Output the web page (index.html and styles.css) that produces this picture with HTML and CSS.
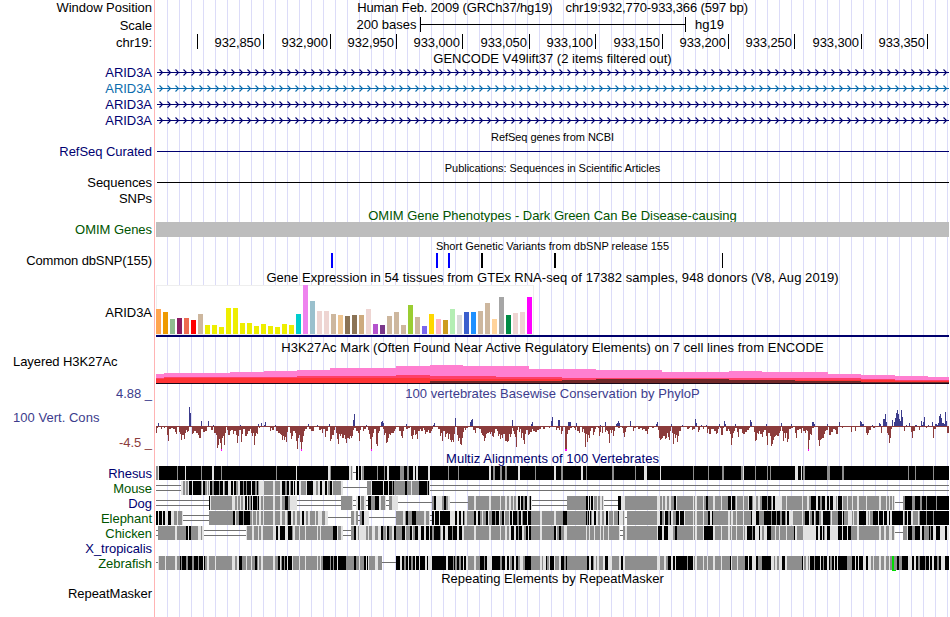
FILE: index.html
```html
<!DOCTYPE html>
<html lang="en">
<head>
<meta charset="utf-8">
<title>Human chr19:932,770-933,366</title>
<link rel="stylesheet" href="styles.css">
</head>
<body>
<main class="browser">
  <div class="row h16 top"><span class="label">Window Position</span><div class="track position"><span>Human Feb. 2009 (GRCh37/hg19)</span><span>chr19:932,770-933,366 (597 bp)</span></div></div>
  <div class="row h18"><span class="label">Scale</span><svg class="track" data-kind="scale" data-h="18"></svg></div>
  <div class="row h16"><span class="label">chr19:</span><svg class="track" data-kind="ruler" data-h="16"></svg></div>
  <div class="title h14 drop"><span>GENCODE V49lift37 (2 items filtered out)</span></div>
  <div class="row h16 navy"><span class="label">ARID3A</span><svg class="track" data-kind="gene" data-h="16"></svg></div>
  <div class="row h16 azure"><span class="label">ARID3A</span><svg class="track" data-kind="gene" data-h="16"></svg></div>
  <div class="row h16 navy"><span class="label">ARID3A</span><svg class="track" data-kind="gene" data-h="16"></svg></div>
  <div class="row h16 navy"><span class="label">ARID3A</span><svg class="track" data-kind="gene" data-h="16"></svg></div>
  <div class="title small h15 drop"><span>RefSeq genes from NCBI</span></div>
  <div class="row h16 navy"><span class="label">RefSeq Curated</span><svg class="track" data-kind="line" data-h="16"></svg></div>
  <div class="title small h15 drop"><span>Publications: Sequences in Scientific Articles</span></div>
  <div class="row h16"><span class="label">Sequences</span><svg class="track" data-kind="line" data-h="16"></svg></div>
  <div class="row h16"><span class="label">SNPs</span></div>
  <div class="title h16 green drop"><span>OMIM Gene Phenotypes - Dark Green Can Be Disease-causing</span></div>
  <div class="row h15"><span class="label green">OMIM Genes</span><div class="track omim"></div></div>
  <div class="title small h16 drop even"><span>Short Genetic Variants from dbSNP release 155</span></div>
  <div class="row h15"><span class="label tight">Common dbSNP(155)</span><svg class="track" data-kind="snps" data-h="15"></svg></div>
  <div class="title h17 drop wide"><span>Gene Expression in 54 tissues from GTEx RNA-seq of 17382 samples, 948 donors (V8, Aug 2019)</span></div>
  <div class="row h53"><span class="label low">ARID3A</span><svg class="track" data-kind="gtex" data-h="53"></svg></div>
  <div class="title h17 drop wide"><span>H3K27Ac Mark (Often Found Near Active Regulatory Elements) on 7 cell lines from ENCODE</span></div>
  <div class="row h29"><span class="label left">Layered H3K27Ac</span><svg class="track" data-kind="h3k" data-h="29"></svg></div>
  <div class="row h67">
    <div class="label limits"><span class="slate">4.88 _</span><span class="slate name">100 Vert. Cons</span><span class="maroon">-4.5 _</span></div>
    <div class="stack"><div class="title h16 slate drop wide"><span>100 vertebrates Basewise Conservation by PhyloP</span></div><svg class="track" data-kind="phylop" data-h="51"></svg></div>
  </div>
  <div class="title h15 navy wide"><span>Multiz Alignments of 100 Vertebrates</span></div>
  <div class="row h15"><span class="label navy">Rhesus</span><svg class="track" data-kind="align" data-name="rhesus" data-h="15"></svg></div>
  <div class="row h15"><span class="label green">Mouse</span><svg class="track" data-kind="align" data-name="mouse" data-h="15"></svg></div>
  <div class="row h15"><span class="label navy">Dog</span><svg class="track" data-kind="align" data-name="dog" data-h="15"></svg></div>
  <div class="row h15"><span class="label green">Elephant</span><svg class="track" data-kind="align" data-name="elephant" data-h="15"></svg></div>
  <div class="row h15"><span class="label green">Chicken</span><svg class="track" data-kind="align" data-name="chicken" data-h="15"></svg></div>
  <div class="row h15"><span class="label navy">X_tropicalis</span></div>
  <div class="row h15"><span class="label green">Zebrafish</span><svg class="track" data-kind="align" data-name="zebrafish" data-h="15"></svg></div>
  <div class="title h15"><span>Repeating Elements by RepeatMasker</span></div>
  <div class="row h15"><span class="label">RepeatMasker</span></div>
</main>
<script src="tracks.js"></script>
</body>
</html>
```
FILE: styles.css
```css
* { box-sizing: border-box; }
body { margin: 0; background: #fff; }
.browser {
  width: 949px;
  height: 617px;
  overflow: hidden;
  color: #000;
  font-family: "Liberation Sans", Arial, sans-serif;
  font-size: 13px;
  background:
    linear-gradient(#ffb4b4, #ffb4b4) 154px 0 / 1px 100% no-repeat,
    repeating-linear-gradient(to right, #dcdcf8 0 1px, transparent 1px 12px) 167px 0 / 782px 100% no-repeat;
}
.row { display: flex; align-items: center; white-space: nowrap; }
.row.top { align-items: flex-start; }
.label { width: 152px; margin-right: 4px; flex: none; text-align: right; line-height: 15px; letter-spacing: -0.04px; }
.label.tight { letter-spacing: -0.12px; }
.label.low { padding-top: 2px; }
.label.left { text-align: left; padding-left: 13px; align-self: flex-start; margin-top: -1px; letter-spacing: -0.07px; }
.track { display: block; width: 793px; flex: none; overflow: hidden; }
.title { margin-left: 156px; width: 793px; text-align: center; line-height: 15px; white-space: nowrap; }
.title.small { font-size: 11px; line-height: 17px; letter-spacing: -0.05px; }
.title.small.even { letter-spacing: 0; }
.title.drop { padding-top: 1px; }
.title.wide { letter-spacing: 0.055px; }
.title.h17, .stack .title.h16, .title.green { padding-top: 2px; }
.position { display: flex; justify-content: center; gap: 13px; line-height: 15px; letter-spacing: -0.14px; }
.omim { height: 15px; background: #bdbdbd; }
.stack { width: 793px; height: 67px; }
.stack .title { margin-left: 0; }
.limits { height: 67px; display: flex; flex-direction: column; justify-content: space-between; padding: 2px 0 1px; }
.limits .name { text-align: left; padding-left: 13px; margin-top: -2px; letter-spacing: 0.03px; }
.h14 { height: 14px; } .h15 { height: 15px; } .h16 { height: 16px; }
.h17 { height: 17px; } .h18 { height: 18px; } .h29 { height: 29px; }
.h53 { height: 53px; } .h67 { height: 67px; }
.navy { color: #000070; }
.azure { color: #0b6cad; }
.green { color: #005400; }
.slate { color: #3c3c8c; }
.maroon { color: #8c3c3c; }
svg text { font-size: 13px; fill: #000; }
```
FILE: tracks.js
```js
const X0 = 156, X1 = 949;
const NS = "http://www.w3.org/2000/svg";

function add(svg, tag, attrs, text) {
  const el = document.createElementNS(NS, tag);
  for (const k in attrs) el.setAttribute(k, attrs[k]);
  if (text) el.textContent = text;
  svg.appendChild(el);
}
function rect(svg, x, y, w, h, fill) {
  add(svg, "rect", { x, y, width: w, height: h, fill });
}
// "158w 159k" -> [[158, "w", 159], [159, "k", end]]
function runs(s) {
  const t = s.trim().split(/\s+/).map(p => p.match(/^(\d+)(.+)$/));
  return t.map((m, i) => [+m[1], m[2], i + 1 < t.length ? +t[i + 1][1] : X1]);
}

const alignments = {
  rhesus: "156g 158w 159k 177g 178k 185w 186k 201g 202k 212w 214k 221g 222k 276g 277k 296w 297k 328w 330g 331k 349w 351g 352w 353- 356k 358w 359k 361w 362g 364k 377g 378k 384g 385k 387w 389k 400g 404k 407g 409k 413w 415k 416w 418k 428w 430k 448g 449k 458g 459k 489w 491k 493g 495k 500g 502k 505g 507k 518w 520k 535g 536k 554w 556k 561g 563k 581w 583k 586g 587k 612g 614k 635g 636k 644w 647k 660w 661k 693g 694k 708g 709k 722g 724k 741g 743w 744k 755g 756k 767g 768k 770g 771k 795w 798k 801w 802k 803g 805k 827g 830k 842g 844k 908g 909k 915g 916k 933g 934k",
  mouse: "156= 181w 183g 185w 186g 188w 189k 192w 193k 201g 202w 203k 205g 207w 208g 209w 210k 212g 214k 219g 220k 223w 224g 225k 228w 231k 233w 234k 236g 238w 240k 243g 244k 246g 247k 251w 252k 255g 257k 258g 259w 264g 273w 275g 280w 282k 285g 287k 289w 290g 291k 293w 294k 295w 297k 299w 301g 306w 307k 313w 316g 318w 320k 322w 325k 327w 328g 330k 332w 333g 341w 343- 367g 371w 372k 383w 384k 388w 389k 392g 393k 394g 405k 407g 411w 412g 419k 427g 428k 429w 430=",
  dog: "156= 209k 210w 211g 232w 235g 237w 238g 240w 241g 243w 245k 247w 248k 249g 251k 252w 253k 257g 258k 259w 261g 263w 264g 273w 275g 280w 282g 285k 288g 290w 297= 341g 352w 353= 356w 358k 360w 361g 364w 366= 368k 371g 375k 379w 381g 385w 386= 389g 392w 398- 432g 434k 436w 442g 444k 446g 448w 450- 468g 474w 476g 489w 491g 500w 501g 505w 507g 509w 511g 513w 514g 516w 518k 520w 521k 523g 525k 527w 529g 530k 531w 532= 567g 586k 588w 589k 590w 591k 593w 594g 597w 598g 600w 602g 603w 604= 618k 621w 625g 657w 660g 662w 663g 665w 667g 669w 671g 674k 676w 677g 693w 694g 695w 697g 703w 704g 706k 708g 713w 715g 721w 722g 728k 731w 732k 735g 736w 737g 743w 744g 748w 749k 752g 753w 756g 758w 760g 762k 767g 768k 771g 772w 773k 775w 782g 786w 787g 802w 803g 807w 809g 811k 816w 818k 820g 822k 825w 827k 829w 830k 833w 836g 837w 838k 842w 843g 847w 848g 852w 853g 857w 859g 866w 867g 879w 881g 886w 887g 889w 890g 892w 893g 894w 895- 903g 905k 912g 915k 920g 922k 926g 927k 936g 937k",
  elephant: "156k 158w 159k 162w 163k 165w 168k 171w 174g 177w 178g 182w 183= 209g 233k 235w 236g 239k 243g 244k 250g 252w 253g 256w 257g 259w 261g 263w 264g 273w 275g 280w 282g 285w 287g 288k 291w 293g 295w 297g 300w 302k 304w 306g 308w 310g 315w 316g 318w 322g 325w 328- 351g 354w 356g 358= 360g 362k 364w 369- 396g 403w 405g 406k 408g 412k 416g 424w 426g 429w 430= 432k 434w 435k 439w 440k 450w 455k 457w 459k 461w 463k 464g 465w 467g 474k 476w 478k 480g 482w 483g 486k 488w 489g 492k 495g 496k 499w 500g 502k 504w 505g 509w 510k 512w 513k 517g 519k 521w 522g 523k 527w 528k 531g 540w 542g 554w 556g 563k 567g 586k 587g 588k 589w 590k 591g 592w 594k 596w 598g 600w 602g 604w 606k 608w 609g 613w 614g 618k 619w 623g 624w 625- 627g 657w 660k 662g 664w 665k 668g 670k 671w 673g 676k 679w 680k 684w 685g 693w 694g 695w 697g 703w 704g 708k 710w 712k 713g 728w 730g 731w 733g 736w 737g 743w 744g 751k 752w 756k 759g 764k 771g 772k 776g 777k 780g 782k 785g 786w 787k 789w 793g 802w 803g 805k 809w 810g 812k 814w 815g 816k 819g 821w 823k 830g 831w 832g 838k 842w 843k 844g 848w 852g 853w 854g 857w 859k 866w 868g 869w 870g 873k 878w 879k 883w 884k 887w 889k 890w 892k 903w 904g 905k 907w 908k 911w 913g 918w 919g 920k 926g 927k 933g 934k",
  chicken: "156= 158g 175w 177g 186k 188w 189k 191g 198w 201g 202w 204= 246w 247g 252w 254g 258w 259g 261w 263g 273w 276k 278w 280k 285w 288k 292g 293w 295g 299w 300g 305w 306g 317w 318g 320w 321g 333k 337w 338g 341w 343= 351g 354k 356w 358g 359w 366g 368w 369g 372w 375g 378w 381k 383g 386w 387k 389g 392w 394k 396g 402k 405w 406g 410k 412w 413g 415k 418w 421k 424w 426k 429w 430k 432g 434k 440g 441w 443k 445w 448k 452g 453k 457w 459k 462w 464g 474w 476g 489w 491g 500w 501g 505w 507g 509w 511k 514w 516k 518g 519k 522w 524g 526k 528w 529k 531g 540w 542g 554k 556w 557g 559k 561g 564w 567g 586w 587g 589w 590g 594w 595g 600w 601g 603w 604g 608w 609g 619w 620= 623g 625w 627g 657w 658k 662w 664k 668w 673g 675k 677g 693w 694g 695w 697g 703w 704k 713w 715g 721w 722g 728w 730g 731w 732g 736w 737g 743w 744g 745w 747k 752g 753k 755w 759k 760w 762g 764w 767k 771g 775w 776g 779w 780g 786w 787g 794k 795w 797g 803w 816k 818w 820k 822w 823k 824g 825w 827k 830w 838k 842w 843k 847w 848k 851g 857w 859g 879w 881g 884w 886g 889w 892g 894w 895- 903g 907w 908k 912g 915k 920w 922k 924g 929k 930g 931k 933w 936k 940w 945k 947w",
  zebrafish: "156- 158w 159g 165w 166g 175w 177g 180k 181g 182k 186g 188k 192g 194k 198g 199k 203w 204k 205g 207w 209g 215w 216g 232w 235g 237w 239k 242g 246w 247g 251w 252g 255k 257g 258w 259g 261w 263g 273w 275g 278k 280w 281g 282k 284g 285k 287w 288k 292w 293g 299w 300g 305w 306g 317w 318g 320w 321g 323k 330g 331k 333g 334k 337w 338k 346g 354k 356g 359w 360g 364k 366w 367k 368w 369g 375w 378g 382- 396k 400w 402k 404g 406k 408w 409k 411g 413k 415w 416k 419w 420k 425w 427k 428w 432k 446w 448k 453g 454k 455g 457k 459g 461k 463w 464k 466w 468g 474w 476g 480k 484g 485k 487w 492k 500g 502k 505w 507k 509w 510g 512k 514w 516k 518g 520w 523g 525k 531g 540w 542g 543w 546k 547g 549w 550k 554w 555g 559w 561k 564g 566k 567g 587k 589w 591k 593g 594w 596g 597w 599g 603w 605k 608w 612g 619w 621k 623w 625g 657w 660g 664w 666g 668k 671w 673k 675w 676k 687g 688k 693w 694g 695w 697g 703w 704g 707w 708g 713w 715g 721w 722g 730k 731w 732g 737w 738g 745k 748w 749k 752w 756k 758g 762k 771w 774g 775w 777g 779w 782k 785w 787g 802k 803w 804g 806w 808g 809w 810k 814g 815k 820w 821k 823g 824k 827w 829k 830g 832k 834w 835k 837w 838k 847g 852k 855w 856k 858w 859k 863w 866k 868w 871g 873w 874g 879w 881g 884w 886g 889w 890g 893g 897k 899g 902k 908w 912k 914w 916k 918g 920k 925g 926k 929w 930k 932w 934k 937g 939k 941w 945k"
};
const shade = { k: "#000", g: "#8e8e8e", w: "#e2e2e2" };

// Conservation scores below and above the axis, in pixels, by start position.
const below = "156 7 157 2 158 1 161 3 162 1 164 2 165 1 167 9 168 15 169 3 171 2 173 3 175 6 176 8 177 1 179 6 180 8 181 14 182 9 184 13 185 7 186 4 187 6 188 5 189 1 192 8 193 7 194 5 196 7 198 9 199 12 201 3 203 6 205 5 207 1 211 4 213 1 214 7 216 9 217 22 218 19 219 13 220 17 221 24 222 12 223 10 224 19 225 7 226 1 227 4 228 9 230 5 231 4 233 8 234 5 236 9 237 17 238 10 239 4 241 16 242 8 243 3 245 10 247 8 248 5 250 3 251 7 252 10 253 7 254 19 255 10 256 7 257 8 258 1 259 2 260 1 270 5 271 2 272 4 274 1 276 5 278 7 280 8 281 9 282 14 283 10 284 14 285 11 286 16 287 6 288 1 290 7 291 13 292 10 293 5 295 7 296 15 297 23 298 12 299 9 300 16 301 24 302 16 303 10 304 5 305 3 307 1 309 3 311 5 314 1 319 4 321 3 322 7 323 3 325 11 326 5 328 1 330 15 331 13 332 9 334 4 335 1 336 7 337 13 338 18 339 8 340 10 341 8 342 12 344 9 345 13 346 17 347 12 349 13 350 10 351 12 352 10 353 4 354 2 356 5 358 7 359 15 360 4 361 1 363 5 364 3 366 1 368 4 369 8 370 13 371 24 372 11 373 7 374 3 376 18 377 20 378 7 379 5 380 1 383 3 384 9 385 7 386 17 387 16 388 12 389 8 390 9 391 7 394 5 395 3 396 1 399 5 401 10 402 12 403 5 404 1 406 3 408 2 410 1 411 10 412 13 413 9 414 4 415 9 416 8 417 13 418 5 420 3 421 5 423 2 424 4 425 8 426 6 428 4 429 7 431 5 432 3 433 1 438 3 440 10 441 7 442 15 443 5 445 11 446 8 447 7 448 13 449 8 450 14 451 16 452 14 453 16 454 8 455 1 457 9 458 15 459 12 460 18 461 19 462 12 463 6 464 2 465 4 466 2 468 1 473 4 475 7 476 2 479 3 481 7 482 9 483 10 484 15 485 12 486 8 487 7 489 6 490 8 491 6 492 10 493 11 494 7 495 3 497 5 498 10 499 8 500 13 501 9 502 12 503 8 505 15 507 16 508 15 509 8 510 11 511 8 512 2 513 5 514 8 515 11 516 21 517 4 518 1 519 6 520 3 521 12 522 7 523 14 524 18 525 8 526 4 528 9 529 8 530 6 532 3 533 5 535 6 537 4 539 3 541 1 543 3 545 1 549 2 550 1 556 4 557 2 559 4 560 1 561 8 562 5 563 1 565 24 567 8 568 4 570 2 572 1 574 2 575 4 576 1 577 5 579 7 580 1 582 6 583 3 584 7 585 21 586 8 587 16 588 9 589 12 590 5 591 2 593 9 594 6 595 3 596 1 598 2 599 10 600 6 601 1 602 7 603 1 605 6 606 4 607 5 608 8 609 17 610 4 611 7 612 4 613 10 614 5 615 1 618 2 620 1 622 2 623 7 624 11 625 6 626 2 627 1 629 1 633 5 634 2 636 1 638 3 640 2 642 4 643 3 645 5 647 8 648 3 649 1 652 2 654 1 658 4 659 12 660 14 661 13 662 12 663 10 665 13 666 12 667 7 668 11 669 14 670 5 671 1 672 7 673 18 674 8 675 12 676 9 677 16 678 10 679 5 680 5 681 1 687 3 689 2 690 1 692 4 693 3 695 1 698 6 699 4 700 1 703 3 704 1 707 7 708 3 709 8 710 8 711 3 714 5 716 8 717 7 718 3 719 1 720 2 721 9 722 9 723 2 724 1 726 5 728 3 729 5 730 8 731 19 732 12 733 7 734 5 735 2 737 6 738 11 739 3 741 3 742 7 743 8 745 6 747 4 749 2 750 1 754 6 755 15 756 14 757 7 758 8 759 5 760 8 762 11 763 6 764 4 765 4 766 10 767 19 768 7 769 7 770 10 771 20 772 18 773 14 774 11 775 10 776 9 777 10 779 7 780 5 781 1 782 5 783 15 784 7 785 12 786 7 787 16 788 13 789 3 791 2 793 1 795 7 796 12 797 4 799 3 801 7 802 2 803 5 805 7 806 4 807 5 808 24 809 14 810 8 811 9 812 2 814 1 818 14 819 20 820 14 821 13 822 12 824 8 825 5 826 4 828 1 829 9 831 6 833 3 835 4 836 8 838 1 842 2 843 1 851 6 852 1 855 5 856 1 866 7 867 9 868 7 869 4 871 1 873 2 875 1 881 7 882 1 887 7 888 9 889 17 890 12 891 3 892 1 904 5 905 1 911 6 912 12 913 5 915 1 919 4 920 1 926 2 927 1 933 12 934 3 936 1 947 7";
const above = "158 3 159 0 189 19 190 13 191 0 201 5 202 0 208 5 209 0 213 1 214 0 240 1 241 0 258 2 259 0 261 3 262 0 264 1 265 4 266 0 275 1 276 0 308 2 309 0 317 1 318 0 329 2 330 0 353 6 354 12 355 0 366 1 367 0 381 4 382 5 383 3 384 0 406 2 407 0 433 1 434 3 435 0 455 8 456 0 470 4 471 6 472 7 473 0 512 6 513 0 531 2 532 4 533 0 551 5 552 9 553 0 558 6 560 0 568 4 571 0 576 3 577 0 600 1 601 0 605 4 606 0 616 2 617 3 618 5 619 3 620 0 630 5 631 0 656 2 657 4 658 0 671 2 672 0 682 1 683 0 695 7 696 3 697 0 701 1 702 0 706 1 707 0 719 2 720 0 724 5 725 2 726 0 735 2 736 0 750 6 751 4 752 0 766 2 767 0 781 3 782 0 791 2 792 0 812 4 814 2 815 0 827 2 828 0 839 4 840 0 860 5 861 4 862 2 864 0 872 1 873 0 879 3 880 2 881 0 883 7 884 7 885 12 886 4 887 0 892 6 893 0 894 4 895 8 896 13 897 16 898 12 899 7 900 5 901 16 902 9 903 0 906 1 907 0 909 3 910 0 915 1 917 0 921 5 922 1 923 4 924 9 925 0 928 1 929 0 932 4 933 0 935 2 937 1 938 3 939 10 940 12 941 8 942 3 944 2 945 14 946 5 947 0";

const layers = [
  ["#ff7fd0", "156 374 164 373 230 372 264 371 297 370 330 368 396 366 430 365 463 366 529 369 596 370 662 372 729 371 762 372 828 374 861 375 895 376 928 377"],
  ["#ff3f68", "156 378 164 377 297 376 396 375 430 376 496 377 562 378 861 379 895 380"],
  ["#ff3434", "156 379 164 378 396 378 430 379 562 380 861 380 895 381"],
  ["#702828", "156 383 430 381 562 380 596 379 729 380 795 381 861 382"],
  ["#180818", "156 383"]
];

const tissues = "ffa54f:309 ee9a00:312 8fbc8f:319 8b1c62:318 ee6a50:318 ff0000:320 cdb79e:314 eeee00:325 eeee00:325 eeee00:327 eeee00:308 eeee00:308 eeee00:323 eeee00:323 eeee00:326 eeee00:324 eeee00:326 eeee00:327 eeee00:324 eeee00:325 00cdcd:314 ee82ee:285 9ac0cd:301 eed5d2:311 eed5d2:311 cdb79e:314 eec591:315 8b7355:316 8b7355:315 cdaa7d:315 eed5d2:309 b452cd:324 7a378b:325 cdb79e:316 cdb79e:312 cdb79e:325 9acd32:305 cdb79e:317 7a67ee:326 ffd700:314 ffb6c1:319 cd9b1d:320 b4eeb4:309 d9d9d9:315 3a5fcd:312 1e90ff:312 cdb79e:311 cdb79e:303 ffd39b:319 a6a6a6:297 008b45:315 eed5d2:313 eed5d2:312 ff00ff:297";

function pairs(s) {
  const v = s.split(" ").map(Number), out = [];
  for (let i = 0; i < v.length; i += 2) out.push([v[i], v[i + 1], i + 2 < v.length ? v[i + 2] : X1]);
  return out;
}

const draw = {
  scale(svg) {
    add(svg, "text", { x: 416.5, y: 13, "text-anchor": "end" }, "200 bases");
    rect(svg, 420, 1, 1, 15, "#000");
    rect(svg, 420, 8, 266, 1, "#000");
    rect(svg, 685, 1, 1, 15, "#000");
    add(svg, "text", { x: 695, y: 13 }, "hg19");
  },
  ruler(svg) {
    [197, 263, 330, 396, 462, 529, 595, 662, 728, 794, 861, 927].forEach((x, i) => {
      rect(svg, x, 0, 1, 15, "#000");
      if (i) add(svg, "text", { x: x - 2, y: 13, "text-anchor": "end", textLength: 46.5 }, (932800 + i * 50).toLocaleString("en-US"));
    });
  },
  gene(svg) {
    rect(svg, 157, 8, 792, 1, "currentColor");
    let d = "";
    for (let x = 162; x < X1; x += 8) d += `M${x - 2.5} 5.5L${x + .5} 8.5L${x - 2.5} 11.5`;
    add(svg, "path", { d, fill: "none", stroke: "currentColor", "stroke-width": 1.1 });
  },
  line(svg) { rect(svg, 157, 8, 792, 1, "currentColor"); },
  snps(svg) {
    [[331, 2, "#00f"], [436, 2, "#00f"], [448, 2, "#00f"], [481, 2, "#000"], [554, 2, "#000"], [722, 1, "#000"]]
      .forEach(([x, w, c]) => rect(svg, x, 0, w, 15, c));
  },
  gtex(svg) {
    rect(svg, 156, 0, 378, 50, "#eee");
    rect(svg, 157, 1, 376, 48, "#fff");
    tissues.split(" ").forEach((t, i) => {
      const [c, top] = t.split(":");
      rect(svg, X0 + i * 7, top - 285, 5, 334 - top, "#" + c);
    });
    rect(svg, 156, 50, 793, 2, "#00006c");
  },
  h3k(svg) {
    layers.forEach(([c, s]) => pairs(s).forEach(([x, y, end]) => rect(svg, x, y - 355, end - x, 384 - y, c)));
  },
  phylop(svg) {
    pairs(below).forEach(([x, h, end]) => {
      rect(svg, x, 26, end - x, Math.max(h, 1), "#8c3c3c");
      if (h >= 24) rect(svg, x, 49, end - x, 2, "#f0f");
    });
    pairs(above).forEach(([x, h, end]) => h && rect(svg, x, 26 - h, end - x, h, "#3c3c8c"));
  },
  align(svg) {
    const name = svg.dataset.name;
    runs(alignments[name]).forEach(([x, c, end]) => {
      if (c === "=") { rect(svg, x, 4, end - x, 1, "#707070"); rect(svg, x, 9, end - x, 1, "#707070"); }
      else if (c === "-") rect(svg, x, 6, end - x, 1, "#707070");
      else rect(svg, x, 0, end - x, 14, shade[c]);
    });
    if (name === "zebrafish") { rect(svg, 892, 0, 1.5, 15, "#00dc00"); rect(svg, 892, 14, 4, 1, "#00dc00"); }
  }
};

document.querySelectorAll("svg.track").forEach(svg => {
  const h = svg.dataset.h;
  svg.setAttribute("viewBox", `${X0} 0 ${X1 - X0} ${h}`);
  svg.setAttribute("height", h);
  svg.setAttribute("shape-rendering", svg.dataset.kind === "gene" ? "auto" : "crispEdges");
  draw[svg.dataset.kind](svg);
});
```
